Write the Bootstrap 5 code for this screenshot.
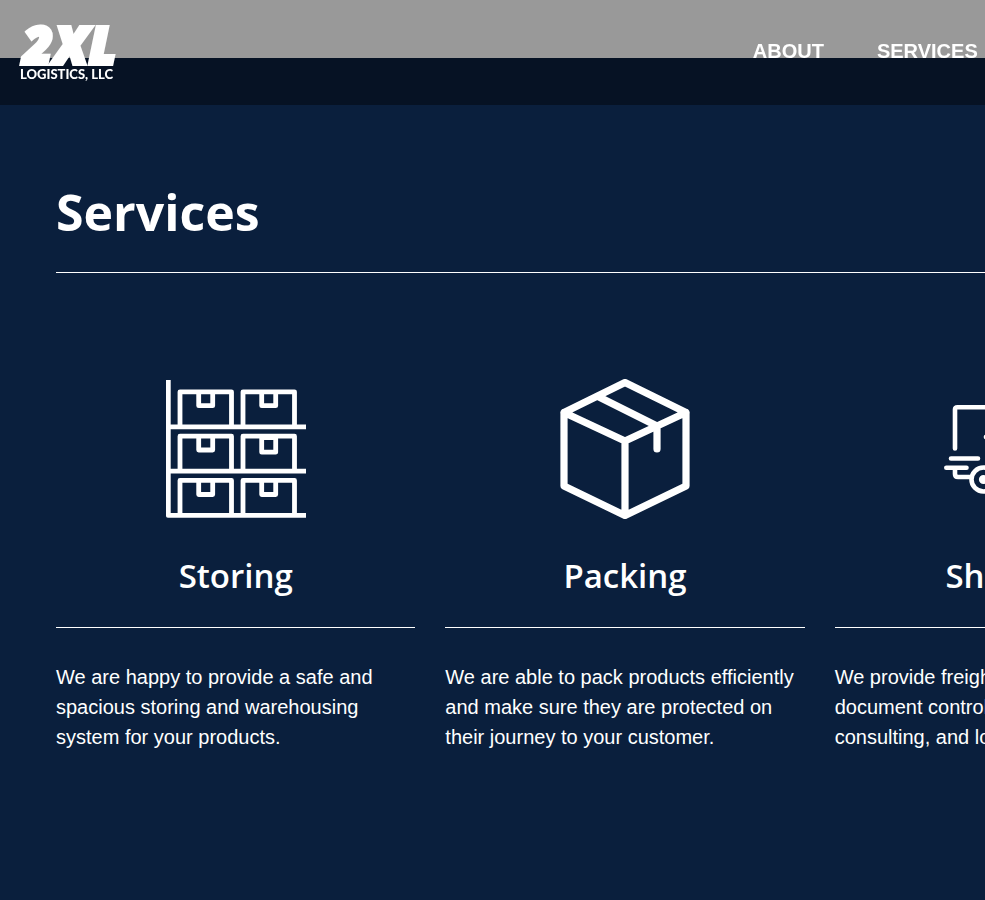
<!DOCTYPE html>
<html lang="en">
<head>
<meta charset="utf-8">
<meta name="viewport" content="width=device-width, initial-scale=1">
<title>2XL Logistics, LLC</title>
<link href="https://cdn.jsdelivr.net/npm/bootstrap@5.3.0/dist/css/bootstrap.min.css" rel="stylesheet">
<style>
  body { font-family: "Liberation Sans", Arial, sans-serif; font-size: 20px; line-height: 30px; background: #fff; }
  .site-frame { min-width: 1250px; }
  .site-header { background: rgba(0, 0, 0, .4); min-height: 105px; padding: 0 20px; }
  .brand-logo { width: 100px; height: 56px; overflow: visible; }
  .logo-big { font: italic 800 51px "Open Sans", sans-serif; stroke: #fff; stroke-width: 4px; }
  .logo-line { font: 900 13px Lato, sans-serif; }
  .main-nav { gap: 53px; margin-right: 103px; padding-bottom: 4px; }
  .main-nav a { font-weight: 700; }
  .services { background: #0a1f3d; margin-top: 58px; padding: 119px 56px 150px; }
  .services h1, .services h2 { font-family: "Open Sans", sans-serif; }
  .services h1 { font-size: 50px; line-height: 70px; font-weight: 700; padding-bottom: 25px; margin-bottom: 106px; }
  .services h2 { font-size: 33px; line-height: 48px; font-weight: 600; margin-top: 33px; padding-bottom: 27px; margin-bottom: 34px; }
  .service-grid { --bs-gutter-x: 30px; }
  .service-icon { width: 140px; height: 140px; }
</style>
<script src="https://cdn.jsdelivr.net/npm/bootstrap@5.3.0/dist/js/bootstrap.bundle.min.js" defer></script>
</head>
<body>
<div class="vh-100 overflow-hidden">
  <div class="site-frame">
    <header class="site-header fixed-top site-frame d-flex align-items-center justify-content-between">
      <a href="#" class="d-block text-white" aria-label="2XL Logistics, LLC">
        <svg class="brand-logo d-block" viewBox="0 0 100 56" fill="#fff">
          <text class="logo-big" y="39"><tspan x="3">2</tspan><tspan x="34">X</tspan><tspan x="69">L</tspan></text>
          <text class="logo-line" x="0" y="54">LOGISTICS, LLC</text>
        </svg>
      </a>
      <nav class="main-nav d-flex">
        <a class="text-white text-decoration-none" href="#about">ABOUT</a>
        <a class="text-white text-decoration-none" href="#services">SERVICES</a>
        <a class="text-white text-decoration-none" href="#contact">CONTACT</a>
      </nav>
    </header>

    <main>
      <section class="services text-white" id="services">
        <h1 class="border-bottom border-white">Services</h1>
        <div class="row service-grid">
          <article class="col-4">
            <svg class="service-icon d-block mx-auto" viewBox="0 0 140 140" fill="none" stroke="#fff" stroke-width="4.8" stroke-linejoin="round" aria-hidden="true">
              <path d="M2.3 1V136.3H140M2.3 47.8H140M2.3 92.2H140"/>
              <path d="M14 47V12.8H65.5V47M77 47V12.8H128.5V47M14 91V57.2H65.5V91M77 91V57.2H128.5V91M14 136V101.4H65.5V136M77 136V101.4H128.5V136"/>
              <path d="M32.7 13V26.7H46.7V13M95.7 13V26.7H109.7V13M32.7 57V71H46.7V57M95.7 58.7H109.7V73.2H95.7ZM32.7 101.5V115.5H46.7V101.5M95.7 101.5V115.5H109.7V101.5"/>
            </svg>
            <h2 class="text-center border-bottom border-white">Storing</h2>
            <p class="mb-0">We are happy to provide a safe and spacious storing and warehousing system for your products.</p>
          </article>
          <article class="col-4">
            <svg class="service-icon d-block mx-auto" viewBox="0 0 140 140" fill="none" stroke="#fff" stroke-width="7.2" stroke-linejoin="round" stroke-linecap="round" aria-hidden="true">
              <path d="M70 3.5 131 33.5V107L70 136.5 9 107V33.5ZM9 33.5 70 62 131 33.5M70 62V136.5M43 17.5 102 47V70"/>
            </svg>
            <h2 class="text-center border-bottom border-white">Packing</h2>
            <p class="mb-0">We are able to pack products efficiently and make sure they are protected on their journey to your customer.</p>
          </article>
          <article class="col-4">
            <svg class="service-icon d-block mx-auto" viewBox="0 0 140 140" fill="none" stroke="#fff" stroke-width="4.6" stroke-linejoin="round" stroke-linecap="round" aria-hidden="true">
              <path d="M11 69.5V30.5Q11 28.2 13.5 28.2H88V97H53M7 79.5H34M2.3 88.8H22.5M11 89V95Q11 98 14 98H26M88 44H113L135 68V98H124M98 98H88M42 58H60"/>
              <circle cx="39.5" cy="100.5" r="12"/><circle cx="39.5" cy="100.5" r="2.3"/>
              <circle cx="111" cy="100.5" r="12"/><circle cx="111" cy="100.5" r="2.3"/>
            </svg>
            <h2 class="text-center border-bottom border-white">Shipping</h2>
            <p class="mb-0">We provide freight management and document control, supply chain consulting, and logistics services.</p>
          </article>
        </div>
      </section>
    </main>
  </div>
</div>
</body>
</html>
